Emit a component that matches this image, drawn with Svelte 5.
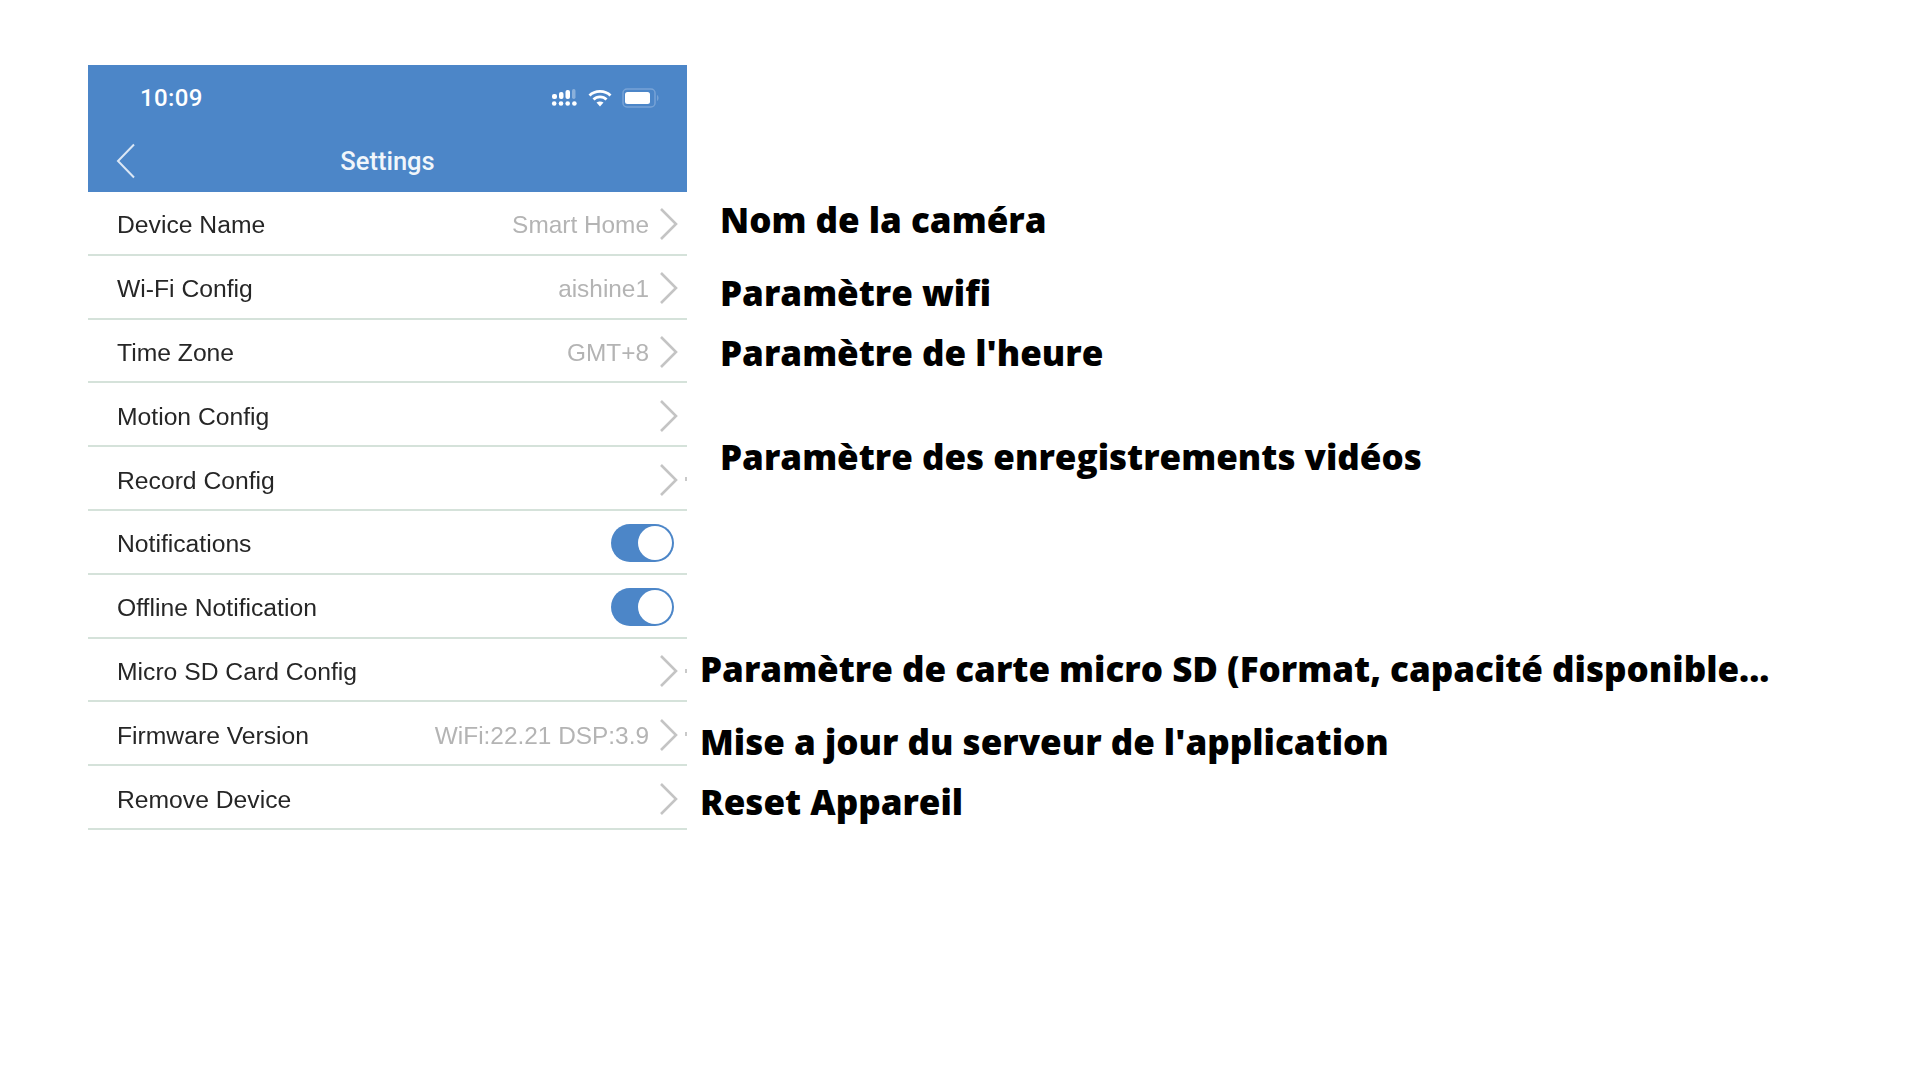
<script>
  const rows = [
    { label: 'Device Name', value: 'Smart Home' },
    { label: 'Wi-Fi Config', value: 'aishine1' },
    { label: 'Time Zone', value: 'GMT+8' },
    { label: 'Motion Config' },
    { label: 'Record Config', speck: true },
    { label: 'Notifications', toggle: true },
    { label: 'Offline Notification', toggle: true },
    { label: 'Micro SD Card Config', speck: true },
    { label: 'Firmware Version', value: 'WiFi:22.21 DSP:3.9', speck: true },
    { label: 'Remove Device' }
  ];

  const notes = [
    { text: 'Nom de la caméra', cls: 'n1' },
    { text: 'Paramètre wifi', cls: 'n2' },
    { text: "Paramètre de l'heure", cls: 'n3' },
    { text: 'Paramètre des enregistrements vidéos', cls: 'n4' },
    { text: 'Paramètre de carte micro SD (Format, capacité disponible...', cls: 'n5' },
    { text: "Mise a jour du serveur de l'application", cls: 'n6' },
    { text: 'Reset Appareil', cls: 'n7' }
  ];
</script>

<div class="page">
  <div class="phone">
    <div class="head">
      <div class="status">
        <span class="time">10:09</span>
        <div class="status-icons">
          <svg width="27" height="18" viewBox="0 0 27 18" fill="#fff">
            <rect x="1" y="5" width="5" height="5" rx="2" />
            <rect x="8" y="3" width="4.5" height="7" rx="2" />
            <rect x="14.5" y="1" width="4.5" height="9" rx="2" />
            <rect x="21" y="0" width="3.5" height="10" rx="1.7" opacity=".35" />
            <circle cx="3.2" cy="14.5" r="2.3" />
            <circle cx="10" cy="14.5" r="2.3" />
            <circle cx="16.7" cy="14.5" r="2.3" />
            <circle cx="23.4" cy="14.5" r="2.3" />
          </svg>
          <svg width="24" height="18" viewBox="0 0 24 18" fill="none" stroke="#fff" stroke-width="2.8">
            <path d="M1.5 6.5 C7 1 17 1 22.5 6.5" />
            <path d="M5.5 10.5 C9 7 15 7 18.5 10.5" />
            <path d="M12 17.5 L8.5 13.6 C10.5 12 13.5 12 15.5 13.6 Z" fill="#fff" stroke="none" />
          </svg>
          <svg width="38" height="20" viewBox="0 0 38 20">
            <rect x="1" y="1" width="32" height="18" rx="4" fill="none" stroke="#77a3d6" stroke-width="1.5" />
            <rect x="3" y="4" width="25" height="12" rx="2.5" fill="#fff" />
            <path d="M35 7 C37 8 37 12 35 13 Z" fill="#77a3d6" />
          </svg>
        </div>
      </div>
      <div class="nav">
        <svg class="back" width="20" height="36" viewBox="0 0 20 36" fill="none" stroke="#dbe7f5" stroke-width="2">
          <path d="M18 1.5 L2 18 L18 34.5" />
        </svg>
        <span class="title">Settings</span>
      </div>
    </div>
    {#each rows as row}
      <div class="row">
        <span class="label">{row.label}</span>
        {#if row.toggle}
          <span class="toggle"><span class="knob"></span></span>
        {:else}
          {#if row.value}<span class="value">{row.value}</span>{/if}
          <svg class="chev" width="20" height="34" viewBox="0 0 20 34" fill="none" stroke="#c4c4c4" stroke-width="2.6">
            <path d="M2 2 L17 17 L2 32" />
          </svg>
          {#if row.speck}<span class="speck"></span>{/if}
        {/if}
      </div>
    {/each}
  </div>

  <div class="notes">
    {#each notes as note}
      <p class="note {note.cls}">{note.text}</p>
    {/each}
  </div>
</div>

<style>
  :global(body) {
    margin: 0;
    background: #fff;
  }

  .page {
    display: flex;
    align-items: flex-start;
    width: 1920px;
    height: 1080px;
    padding: 65px 0 0 88px;
    box-sizing: border-box;
    overflow: hidden;
  }

  .phone {
    width: 599px;
    flex-shrink: 0;
    filter: blur(0.6px);
    font-family: "Liberation Sans", Arial, sans-serif;
  }

  .head {
    background: #4c86c8;
    height: 127px;
    color: #fff;
  }

  .status {
    display: flex;
    align-items: center;
    justify-content: space-between;
    height: 66px;
    padding: 0 27px 0 52px;
  }

  .time {
    font-size: 24px;
    font-family: Roboto, sans-serif;
    font-weight: 500;
    letter-spacing: 0.4px;
  }

  .status-icons {
    display: flex;
    align-items: center;
    gap: 10px;
  }

  .nav {
    position: relative;
    display: flex;
    justify-content: center;
    align-items: center;
    height: 61px;
    padding-bottom: 2px;
    box-sizing: border-box;
  }

  .back {
    position: absolute;
    left: 28px;
    top: 12px;
  }

  .title {
    font-size: 25.5px;
    font-family: Roboto, sans-serif;
    font-weight: 500;
    color: #f1f6fb;
  }

  .row {
    position: relative;
    display: flex;
    align-items: center;
    height: 63.8px;
    box-sizing: border-box;
    padding: 3px 8px 0 29px;
    border-bottom: 2px solid #d5e2da;
  }

  .label {
    flex: 1;
    margin-top: 2px;
    font-size: 24.7px;
    color: #262626;
  }

  .value {
    margin-top: 2px;
    font-size: 24.4px;
    color: #b4b4b4;
    margin-right: 10px;
  }

  .chev {
    flex-shrink: 0;
  }

  .speck {
    position: absolute;
    right: 0;
    top: 30px;
    width: 2px;
    height: 4px;
    background: #c9c9c9;
  }

  .toggle {
    display: flex;
    justify-content: flex-end;
    align-items: center;
    width: 63px;
    height: 38px;
    margin-right: 5px;
    padding-right: 2px;
    box-sizing: border-box;
    border-radius: 19px;
    background: #4c86c8;
  }

  .knob {
    width: 34px;
    height: 34px;
    border-radius: 50%;
    background: #fff;
  }

  .notes {
    display: flex;
    flex-direction: column;
    font-family: "Open Sans", sans-serif;
    font-weight: 800;
    font-size: 36px;
    line-height: 48px;
    color: #000;
  }

  .note {
    margin: 0;
    white-space: nowrap;
    transform: scaleX(0.972);
    transform-origin: left center;
  }

  .n1 { margin: 131px 0 0 33px; }
  .n2 { margin: 25px 0 0 33px; }
  .n3 { margin: 12px 0 0 33px; }
  .n4 { margin: 56px 0 0 33px; }
  .n5 { margin: 164px 0 0 13px; }
  .n6 { margin: 25px 0 0 13px; }
  .n7 { margin: 12px 0 0 13px; }
</style>
